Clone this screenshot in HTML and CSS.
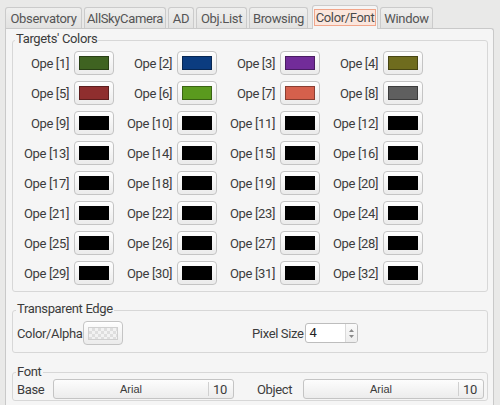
FILE: index.html
```html
<!DOCTYPE html>
<html>
<head>
<meta charset="utf-8">
<link rel="stylesheet" href="styles.css">
</head>
<body>
<div class="tabbar">
  <div class="tab t-obs">Observatory</div>
  <div class="tab t-sky">AllSkyCamera</div>
  <div class="tab t-ad">AD</div>
  <div class="tab t-obj">Obj.List</div>
  <div class="tab t-brw">Browsing</div>
  <div class="tab active"><span class="focus">Color/Font</span></div>
  <div class="tab t-win">Window</div>
</div>
<div class="pane">
  <fieldset class="group targets">
    <legend>Targets' Colors</legend>
    <div class="ope-grid">
      <div class="ope"><span>Ope [1]</span><span class="cbtn"><span class="sw c1"></span></span></div>
      <div class="ope"><span>Ope [2]</span><span class="cbtn"><span class="sw c2"></span></span></div>
      <div class="ope"><span>Ope [3]</span><span class="cbtn"><span class="sw c3"></span></span></div>
      <div class="ope"><span>Ope [4]</span><span class="cbtn"><span class="sw c4"></span></span></div>
      <div class="ope"><span>Ope [5]</span><span class="cbtn"><span class="sw c5"></span></span></div>
      <div class="ope"><span>Ope [6]</span><span class="cbtn"><span class="sw c6"></span></span></div>
      <div class="ope"><span>Ope [7]</span><span class="cbtn"><span class="sw c7"></span></span></div>
      <div class="ope"><span>Ope [8]</span><span class="cbtn"><span class="sw c8"></span></span></div>
      <div class="ope"><span>Ope [9]</span><span class="cbtn"><span class="sw"></span></span></div>
      <div class="ope"><span>Ope [10]</span><span class="cbtn"><span class="sw"></span></span></div>
      <div class="ope"><span>Ope [11]</span><span class="cbtn"><span class="sw"></span></span></div>
      <div class="ope"><span>Ope [12]</span><span class="cbtn"><span class="sw"></span></span></div>
      <div class="ope"><span>Ope [13]</span><span class="cbtn"><span class="sw"></span></span></div>
      <div class="ope"><span>Ope [14]</span><span class="cbtn"><span class="sw"></span></span></div>
      <div class="ope"><span>Ope [15]</span><span class="cbtn"><span class="sw"></span></span></div>
      <div class="ope"><span>Ope [16]</span><span class="cbtn"><span class="sw"></span></span></div>
      <div class="ope"><span>Ope [17]</span><span class="cbtn"><span class="sw"></span></span></div>
      <div class="ope"><span>Ope [18]</span><span class="cbtn"><span class="sw"></span></span></div>
      <div class="ope"><span>Ope [19]</span><span class="cbtn"><span class="sw"></span></span></div>
      <div class="ope"><span>Ope [20]</span><span class="cbtn"><span class="sw"></span></span></div>
      <div class="ope"><span>Ope [21]</span><span class="cbtn"><span class="sw"></span></span></div>
      <div class="ope"><span>Ope [22]</span><span class="cbtn"><span class="sw"></span></span></div>
      <div class="ope"><span>Ope [23]</span><span class="cbtn"><span class="sw"></span></span></div>
      <div class="ope"><span>Ope [24]</span><span class="cbtn"><span class="sw"></span></span></div>
      <div class="ope"><span>Ope [25]</span><span class="cbtn"><span class="sw"></span></span></div>
      <div class="ope"><span>Ope [26]</span><span class="cbtn"><span class="sw"></span></span></div>
      <div class="ope"><span>Ope [27]</span><span class="cbtn"><span class="sw"></span></span></div>
      <div class="ope"><span>Ope [28]</span><span class="cbtn"><span class="sw"></span></span></div>
      <div class="ope"><span>Ope [29]</span><span class="cbtn"><span class="sw"></span></span></div>
      <div class="ope"><span>Ope [30]</span><span class="cbtn"><span class="sw"></span></span></div>
      <div class="ope"><span>Ope [31]</span><span class="cbtn"><span class="sw"></span></span></div>
      <div class="ope"><span>Ope [32]</span><span class="cbtn"><span class="sw"></span></span></div>
    </div>
  </fieldset>

  <fieldset class="group edge">
    <legend>Transparent Edge</legend>
    <div class="edge-row">
      <div class="field alpha"><span>Color/Alpha</span><span class="cbtn"><span class="sw checker"></span></span></div>
      <div class="field pix"><span>Pixel Size</span>
        <span class="spin"><span class="val">4</span>
          <span class="arrows">
            <svg width="5" height="3" viewBox="0 0 5 3"><path d="M0 3 L2.5 0 L5 3 Z" fill="#8a8a8a"/></svg>
            <svg width="5" height="3" viewBox="0 0 5 3"><path d="M0 0 L2.5 3 L5 0 Z" fill="#8a8a8a"/></svg>
          </span>
        </span>
      </div>
    </div>
  </fieldset>

  <fieldset class="group font">
    <legend>Font</legend>
    <div class="font-row">
      <span>Base</span>
      <span class="fbtn"><span class="name">Arial</span><span class="size">10</span></span>
      <span class="lbl2">Object</span>
      <span class="fbtn"><span class="name">Arial</span><span class="size">10</span></span>
    </div>
  </fieldset>
</div>
</body>
</html>
```

FILE: styles.css
```css
* { box-sizing: border-box; }
html, body { margin: 0; }
body {
  width: 500px;
  height: 405px;
  overflow: hidden;
  background: #e9e9e8;
  font-family: Roboto, Lato, "Noto Sans", sans-serif;
  font-size: 13px;
  letter-spacing: -0.35px;
  color: #3c3c3c;
}

.tabbar {
  display: flex;
  align-items: flex-end;
  height: 28px;
  padding-left: 5px;
  gap: 2px;
  position: relative;
  z-index: 1;
}
.tab {
  height: 21px;
  padding: 0;
  border: 1px solid #cbcbcb;
  border-bottom: none;
  border-radius: 3px 3px 0 0;
  background: linear-gradient(#efefee, #e2e2e1);
  color: #555;
  display: flex;
  align-items: center;
  justify-content: center;
  white-space: nowrap;
  line-height: 1;
}
.t-obs { width: 77px; }
.t-sky { width: 82px; }
.t-ad { width: 26px; }
.t-obj { width: 51px; }
.t-brw { width: 59px; }
.t-win { width: 53px; }
.tab.active {
  width: 66px;
  height: 24px;
  margin: 0 0 -1px 2px;
  padding: 3px 1px 0;
  align-items: flex-start;
  background: #f5f5f5;
}
.focus {
  width: 62px;
  border: 1px solid #f2a68a;
  background: #fbe6dd;
  height: 17px;
  display: flex;
  align-items: center;
  justify-content: center;
  color: #4a4a4a;
}

.pane {
  margin: 0 6px 0 5px;
  height: 377px;
  border: 1px solid #c9c9c9;
  border-bottom: none;
  border-radius: 0 3px 0 0;
  background: #f5f5f5;
  padding: 3px 5px 0 6px;
  overflow: hidden;
}

.group {
  margin: 0;
  border: 1px solid #d7d7d7;
  border-radius: 3px;
  min-width: 0;
}
.group legend {
  padding: 0 1px 3px;
  margin-left: -1px;
  line-height: 14px;
  font-size: 13px;
  color: #3c3c3c;
}

.targets { padding: 2px 3px 6px; }
.ope-grid {
  display: grid;
  grid-template-columns: repeat(4, 98px);
  column-gap: 5px;
  row-gap: 6px;
}
.ope {
  display: flex;
  justify-content: flex-end;
  align-items: center;
  gap: 5px;
  height: 24px;
}
.cbtn {
  width: 40px;
  height: 24px;
  flex: none;
  border: 1px solid #c4c4c4;
  border-radius: 4px;
  background: linear-gradient(#fefefe, #ebebeb);
  box-shadow: inset 0 1px 0 #fff;
  display: flex;
  align-items: center;
  justify-content: center;
}
.sw {
  width: 30px;
  height: 14px;
  background: #000;
  border: 1px solid rgba(0, 0, 0, 0.35);
}
.c1 { background: #3f6321; }
.c2 { background: #0b3c80; }
.c3 { background: #722c99; }
.c4 { background: #6f6c1e; }
.c5 { background: #8f2e2e; }
.c6 { background: #5a9a1e; }
.c7 { background: #d5604c; }
.c8 { background: #5f5f5f; }
.sw.checker {
  height: 13px;
  border: 1px solid #d0d0d0;
  background: repeating-conic-gradient(#dedede 0 25%, #f2f2f2 0 50%) 0 0 / 6px 6px;
}

.edge { margin-top: 10px; padding: 2px 4px 7px; }
.edge-row {
  display: grid;
  grid-template-columns: 1fr 1fr;
  column-gap: 4px;
}
.field {
  display: flex;
  align-items: center;
  gap: 3px;
  height: 24px;
}
.alpha { gap: 0; }
.pix { gap: 1px; }
.spin {
  width: 53px;
  height: 20px;
  border: 1px solid #bdbdbd;
  border-radius: 3px;
  background: #fff;
  display: flex;
  overflow: hidden;
}
.spin .val { flex: 1; padding-left: 4px; line-height: 18px; color: #222; }
.spin .arrows {
  width: 12px;
  border-left: 1px solid #dadada;
  background: linear-gradient(#fafafa, #ededed);
  display: flex;
  flex-direction: column;
  align-items: center;
  justify-content: center;
  gap: 3px;
}
.spin svg { display: block; }

.font { margin-top: 12px; padding: 0 3px 1px 4px; }
.font legend { padding-bottom: 0; }
.font-row {
  display: grid;
  grid-template-columns: 36px 181px 69px 181px;
  align-items: center;
}
.lbl2 { padding-left: 23px; }
.fbtn {
  height: 20px;
  border: 1px solid #c4c4c4;
  border-radius: 3px;
  background: linear-gradient(#fdfdfd, #ececec);
  display: flex;
  align-items: center;
}
.fbtn .name {
  flex: 1;
  text-align: center;
  font-family: "Liberation Sans", Arial, sans-serif;
  font-size: 11px;
  letter-spacing: 0;
  color: #3c3c3c;
}
.fbtn .size {
  width: 25px;
  height: 14px;
  border-left: 1px solid #d0d0d0;
  padding-left: 4px;
  display: flex;
  align-items: center;
}
```
